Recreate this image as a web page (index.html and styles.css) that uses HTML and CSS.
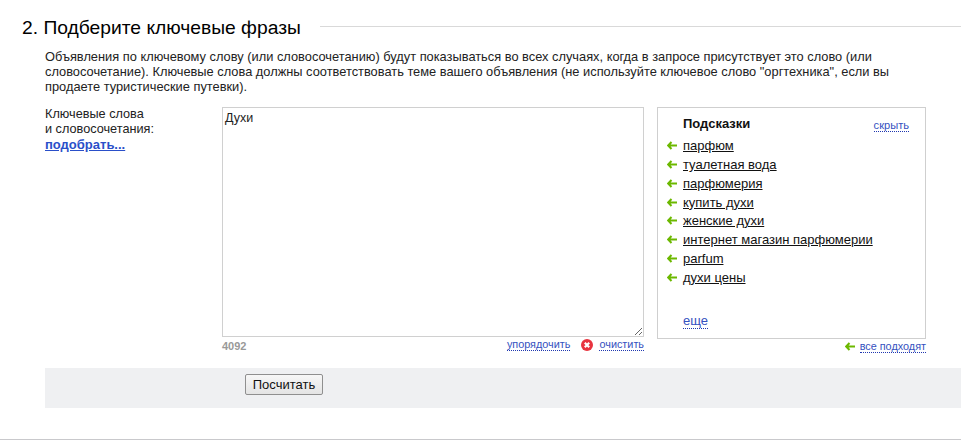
FILE: index.html
```html
<!DOCTYPE html>
<html lang="ru">
<head>
<meta charset="utf-8">
<title>Подберите ключевые фразы</title>
<link rel="stylesheet" href="styles.css">
</head>
<body>
<section class="step">
  <header class="step-head">
    <h2 class="step-title">2. Подберите ключевые фразы</h2>
    <div class="step-rule"></div>
  </header>
  <p class="intro">Объявления по ключевому слову (или словосочетанию) будут показываться во всех случаях, когда в запросе присутствует это слово (или словосочетание). Ключевые слова должны соответствовать теме вашего объявления (не используйте ключевое слово "оргтехника", если вы продаете туристические путевки).</p>
  <div class="editor">
    <div class="label-col">
      <div>Ключевые слова<br>и словосочетания:</div>
      <a class="pick" href="#">подобрать...</a>
    </div>
    <div class="text-col">
      <textarea class="keywords">Духи</textarea>
      <div class="text-foot">
        <span class="count">4092</span>
        <span class="actions">
          <a class="dotted" href="#">упорядочить</a>
          <svg class="clear-icon" width="12" height="12" viewBox="0 0 12 12"><circle cx="6" cy="6" r="6" fill="#e8343f"/><path d="M3.8 3.8l4.4 4.4M8.2 3.8l-4.4 4.4" stroke="#fff" stroke-width="2.2"/></svg>
          <a class="dotted" href="#">очистить</a>
        </span>
      </div>
    </div>
    <div class="hint-col">
      <div class="hints">
        <div class="hints-head">
          <b class="hints-title">Подсказки</b>
          <a class="dotted" href="#">скрыть</a>
        </div>
        <ul class="hint-list">
          <li class="hint"><svg class="arrow" width="10" height="9" viewBox="0 0 10 9"><path d="M4.5 1L1.2 4.5 4.5 8M1.5 4.5H10" fill="none" stroke="#6cb800" stroke-width="2"/></svg><a class="hint-link" href="#">парфюм</a></li>
          <li class="hint"><svg class="arrow" width="10" height="9" viewBox="0 0 10 9"><path d="M4.5 1L1.2 4.5 4.5 8M1.5 4.5H10" fill="none" stroke="#6cb800" stroke-width="2"/></svg><a class="hint-link" href="#">туалетная вода</a></li>
          <li class="hint"><svg class="arrow" width="10" height="9" viewBox="0 0 10 9"><path d="M4.5 1L1.2 4.5 4.5 8M1.5 4.5H10" fill="none" stroke="#6cb800" stroke-width="2"/></svg><a class="hint-link" href="#">парфюмерия</a></li>
          <li class="hint"><svg class="arrow" width="10" height="9" viewBox="0 0 10 9"><path d="M4.5 1L1.2 4.5 4.5 8M1.5 4.5H10" fill="none" stroke="#6cb800" stroke-width="2"/></svg><a class="hint-link" href="#">купить духи</a></li>
          <li class="hint"><svg class="arrow" width="10" height="9" viewBox="0 0 10 9"><path d="M4.5 1L1.2 4.5 4.5 8M1.5 4.5H10" fill="none" stroke="#6cb800" stroke-width="2"/></svg><a class="hint-link" href="#">женские духи</a></li>
          <li class="hint"><svg class="arrow" width="10" height="9" viewBox="0 0 10 9"><path d="M4.5 1L1.2 4.5 4.5 8M1.5 4.5H10" fill="none" stroke="#6cb800" stroke-width="2"/></svg><a class="hint-link" href="#">интернет магазин парфюмерии</a></li>
          <li class="hint"><svg class="arrow" width="10" height="9" viewBox="0 0 10 9"><path d="M4.5 1L1.2 4.5 4.5 8M1.5 4.5H10" fill="none" stroke="#6cb800" stroke-width="2"/></svg><a class="hint-link" href="#">parfum</a></li>
          <li class="hint"><svg class="arrow" width="10" height="9" viewBox="0 0 10 9"><path d="M4.5 1L1.2 4.5 4.5 8M1.5 4.5H10" fill="none" stroke="#6cb800" stroke-width="2"/></svg><a class="hint-link" href="#">духи цены</a></li>
        </ul>
        <a class="dotted more" href="#">еще</a>
      </div>
      <div class="hints-foot">
        <svg class="arrow" width="10" height="9" viewBox="0 0 10 9"><path d="M4.5 1L1.2 4.5 4.5 8M1.5 4.5H10" fill="none" stroke="#6cb800" stroke-width="2"/></svg>
        <a class="dotted" href="#">все подходят</a>
      </div>
    </div>
  </div>
  <div class="submit-bar"><button class="submit" type="button">Посчитать</button></div>
</section>
<div class="bottom-rule"></div>
</body>
</html>
```

FILE: styles.css
```css
* { box-sizing: border-box; }
html, body { margin: 0; padding: 0; }
body {
  width: 961px;
  height: 441px;
  overflow: hidden;
  background: #fff;
  color: #000;
  font-family: "Liberation Sans", Arial, sans-serif;
  font-size: 12.7px;
}
.step { padding-top: 17px; height: 439px; }
.step-head {
  display: flex;
  align-items: center;
  padding-left: 22px;
  height: 21px;
}
.step-title {
  margin: 0;
  font-size: 19.25px;
  font-weight: normal;
  line-height: 21px;
  white-space: nowrap;
}
.step-rule {
  flex: 1;
  height: 1px;
  margin: 0 0 2px 19px;
  background: #d9d9d9;
}
.intro {
  margin: 11px 0 0 45px;
  width: 870px;
  font-size: 12.83px;
  line-height: 15px;
  color: #222;
}
.editor {
  display: flex;
  margin: 13px 0 0 45px;
  align-items: flex-start;
}
.label-col {
  width: 177px;
  line-height: 15px;
  padding-top: 0;
  color: #222;
}
.pick {
  color: #2a4fc9;
  font-size: 13px;
  font-weight: bold;
  display: block;
}
.text-col { width: 422px; }
.keywords {
  display: block;
  width: 422px;
  height: 230px;
  border: 1px solid #d0d0d0;
  padding: 3px 2px;
  margin: 0;
  font-family: "Liberation Sans", Arial, sans-serif;
  font-size: 12.5px;
  line-height: 15px;
  color: #222;
  background: #fff;
}
.text-foot {
  display: flex;
  justify-content: space-between;
  align-items: center;
  height: 17px;
}
.count { color: #999; font-weight: bold; font-size: 11px; }
.actions { display: flex; align-items: center; margin-top: -2px; }
.clear-icon { margin: 0 6px 0 11px; }
.dotted {
  color: #3551c0;
  font-size: 10.85px;
  text-decoration: none;
  border-bottom: 1px dotted #1f37b0;
  line-height: 12px;
}
.hint-col { width: 269px; margin-left: 13px; }
.hints {
  position: relative;
  height: 232px;
  border: 1px solid #cfcfcf;
  padding: 8px 16px 0 9px;
}
.hints-head {
  display: flex;
  justify-content: space-between;
  align-items: flex-start;
  padding-left: 16px;
  height: 20.3px;
}
.hints-title { line-height: 15px; color: #111; font-size: 13px; }
.hints-head .dotted { margin-top: 3px; font-size: 11.1px; }
.hint-list { list-style: none; margin: 0; padding: 0; }
.hint {
  display: flex;
  align-items: center;
  height: 18.8px;
}
.arrow { flex: none; }
.hint .arrow { margin-right: 6px; }
.hint-link { color: #111; font-size: 13px; text-decoration: underline; line-height: 15px; }
.more {
  display: inline-block;
  margin: 27px 0 0 16px;
  font-size: 13px;
  line-height: 14px;
}
.hints-foot {
  display: flex;
  justify-content: flex-end;
  align-items: center;
  gap: 5px;
  height: 15px;
}
.submit-bar {
  margin: 14px 0 0 45px;
  height: 40px;
  padding: 6px 0 0 200px;
  background: #eff0f2;
}
.submit {
  display: block;
  width: 78px;
  height: 21px;
  padding: 0;
  border: 1px solid #8f8f8f;
  border-radius: 2px;
  background: linear-gradient(#f7f7f7, #e4e4e4);
  color: #111;
  font-family: "Liberation Sans", Arial, sans-serif;
  font-size: 13px;
}
.bottom-rule { height: 1px; background: #c9c9cc; }
```
